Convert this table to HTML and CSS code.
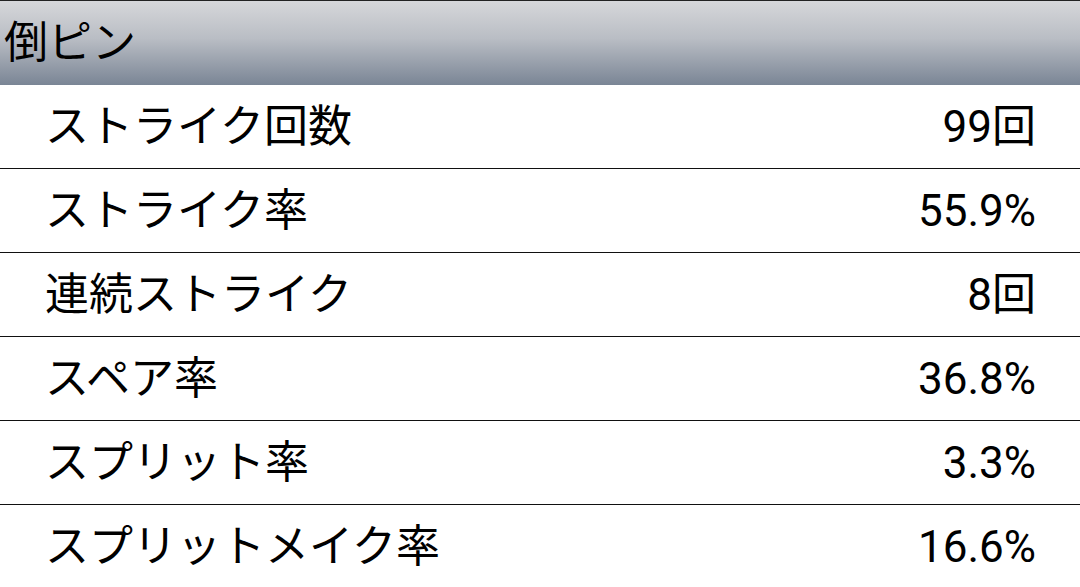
FILE: index.html
```html
<!DOCTYPE html>
<html lang="ja">
<head>
<meta charset="utf-8">
<link rel="stylesheet" href="styles.css">
</head>
<body>
<div class="header">倒ピン</div>
<div class="list">
  <div class="row"><span class="label">ストライク回数</span><span class="value">99回</span></div>
  <div class="row"><span class="label">ストライク率</span><span class="value">55.9%</span></div>
  <div class="row"><span class="label">連続ストライク</span><span class="value">8回</span></div>
  <div class="row"><span class="label">スペア率</span><span class="value">36.8%</span></div>
  <div class="row"><span class="label">スプリット率</span><span class="value">3.3%</span></div>
  <div class="row"><span class="label">スプリットメイク率</span><span class="value">16.6%</span></div>
</div>
</body>
</html>
```
FILE: styles.css
```css
html, body {
  margin: 0;
  padding: 0;
  background: #ffffff;
  overflow: hidden;
}
body {
  font-family: Roboto, "Noto Sans CJK JP", sans-serif;
  font-size: 44px;
  color: #000;
}
.header {
  height: 84px;
  border-top: 1px solid #222;
  background: linear-gradient(to bottom, #d6d7da 0%, #b9bdc4 45%, #7a8595 100%);
  padding-left: 4px;
  display: flex;
  align-items: center;
  line-height: 1;
}
.list {
  display: flex;
  flex-direction: column;
}
.row {
  height: 83px;
  border-bottom: 1px solid #111;
  display: flex;
  align-items: center;
  justify-content: space-between;
  padding: 0 44px 0 45px;
  line-height: 1;
}
```
